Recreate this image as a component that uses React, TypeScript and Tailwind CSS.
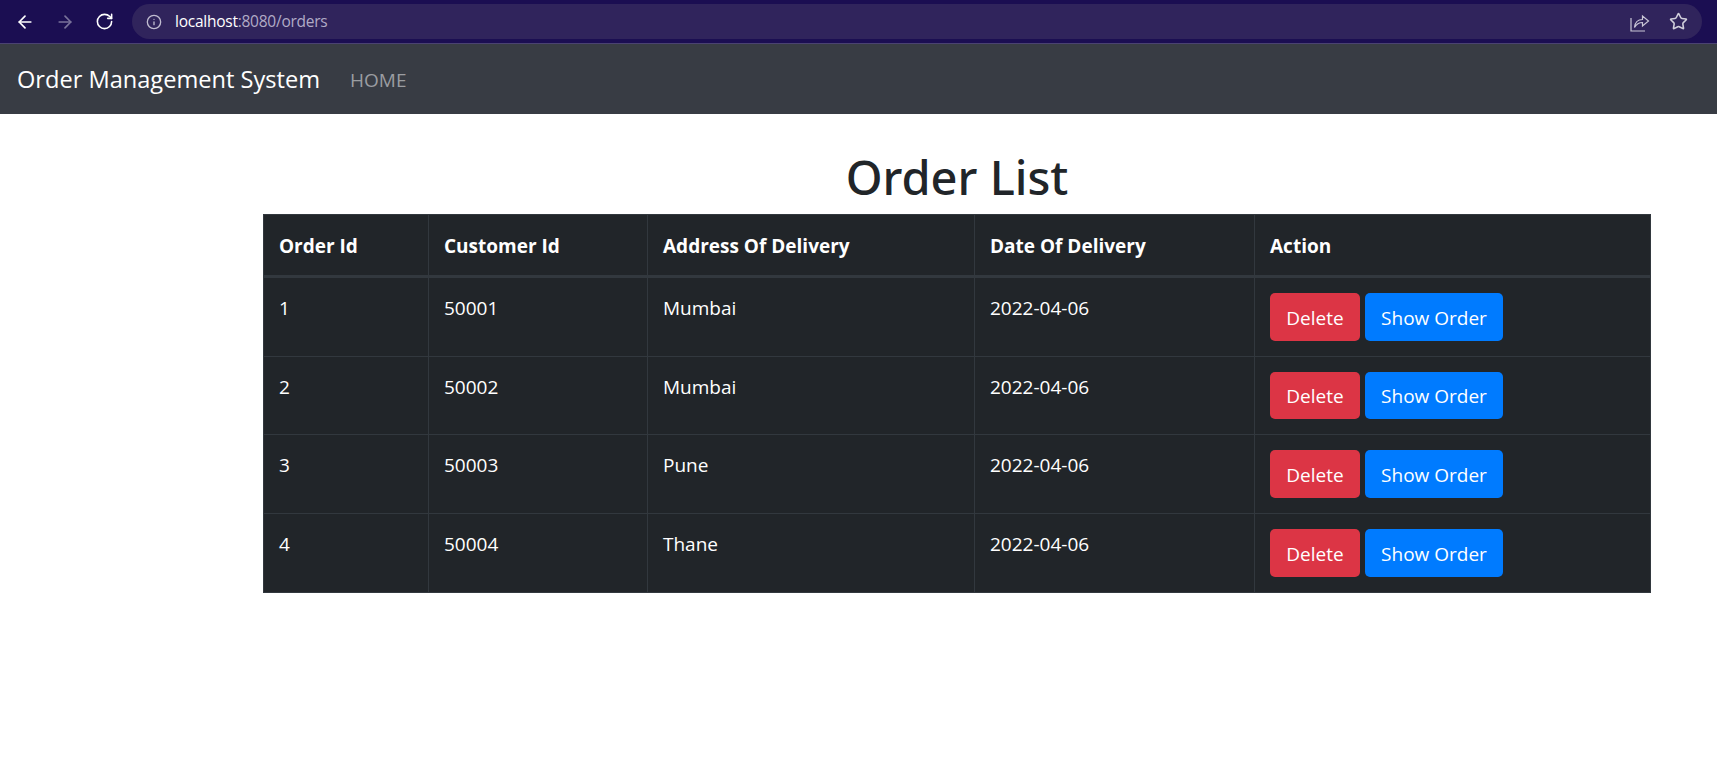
import { ArrowLeft, ArrowRight, RotateCw, Info, Star } from 'lucide-react';

const orders = [
  { id: 1, customerId: 50001, address: 'Mumbai', date: '2022-04-06' },
  { id: 2, customerId: 50002, address: 'Mumbai', date: '2022-04-06' },
  { id: 3, customerId: 50003, address: 'Pune', date: '2022-04-06' },
  { id: 4, customerId: 50004, address: 'Thane', date: '2022-04-06' },
];

const headers = ['Order Id', 'Customer Id', 'Address Of Delivery', 'Date Of Delivery', 'Action'];
const colWidths = ['w-[165px]', 'w-[219px]', 'w-[327px]', 'w-[280px]', 'w-[396px]'];

const ShareIcon = () => (
  <svg width="20" height="20" viewBox="0 0 20 20" fill="none" stroke="currentColor" strokeWidth="1.2" className="text-[#c9c6d6]">
    <path d="M1 6v13h14" />
    <path d="M4.5 15.5c.5-5 3.5-8 8-8V4l6 5-6 5v-3.5c-3.5 0-6 1.5-8 5z" />
  </svg>
);

const BrowserBar = () => (
  <div className="h-[44px] bg-[#1b0e52] border-b border-[#4a4272] flex items-center pl-[15px] pr-[15px]">
    <ArrowLeft size={20} strokeWidth={2} className="text-white" />
    <ArrowRight size={20} strokeWidth={2} className="text-[#79729a] ml-[20px]" />
    <RotateCw size={19} strokeWidth={2} className="text-white ml-[20px]" />
    <div className="ml-[18px] flex-1 h-[35px] rounded-full bg-[#30245c] flex items-center pl-[14px] pr-[14px]">
      <Info size={16} strokeWidth={2} className="text-[#c0bcd0]" />
      <div className="ml-[13px] text-[15.5px] tracking-[-0.25px] font-['Open_Sans',sans-serif] text-[#b0abc6]">
        <span className="text-white">localhost</span>:8080/orders
      </div>
      <div className="ml-auto flex items-center gap-[19px]">
        <ShareIcon />
        <Star size={19} strokeWidth={2} className="text-[#d0cedb]" />
      </div>
    </div>
  </div>
);

export default function App() {
  return (
    <div className="min-h-[775px] bg-white font-['Open_Sans',sans-serif] text-[#212529]">
      <BrowserBar />
      <nav className="h-[70px] bg-[#383c44] flex items-center pl-[17px]">
        <span className="pt-[2px] text-[23.6px] text-white">Order Management System</span>
        <span className="pt-[2px] ml-[30px] text-[19px] text-[#9b9da1]">HOME</span>
      </nav>
      <main className="pl-[263px] pr-[66px]">
        <h1 className="font-['Noto_Sans',sans-serif] text-[47px] leading-[58px] mt-[34px] mb-[8px] font-medium text-center">Order List</h1>
        <table className="w-[1387px] table-fixed border-collapse bg-[#212529] text-white text-[19px]">
          <thead>
            <tr className="h-[62px]">
              {headers.map((h, i) => (
                <th key={h} className={`${colWidths[i]} text-left font-bold px-[15px] pt-[2px] border border-[#32383e] border-b-[3px]`}>{h}</th>
              ))}
            </tr>
          </thead>
          <tbody>
            {orders.map((o) => (
              <tr key={o.id} className="h-[78.75px]">
                <td className="px-[15px] pt-[16px] align-top border border-[#32383e]">{o.id}</td>
                <td className="px-[15px] pt-[16px] align-top border border-[#32383e]">{o.customerId}</td>
                <td className="px-[15px] pt-[16px] align-top border border-[#32383e]">{o.address}</td>
                <td className="px-[15px] pt-[16px] align-top border border-[#32383e]">{o.date}</td>
                <td className="px-[15px] pt-[15px] pb-[15px] align-top border border-[#32383e]">
                  <div className="flex gap-[5px]">
                    <button className="h-[47.5px] w-[90px] pt-[2px] rounded-[5px] bg-[#dc3545] text-white">Delete</button>
                    <button className="h-[47.5px] w-[138px] pt-[2px] rounded-[5px] bg-[#007bff] text-white">Show Order</button>
                  </div>
                </td>
              </tr>
            ))}
          </tbody>
        </table>
      </main>
    </div>
  );
}
